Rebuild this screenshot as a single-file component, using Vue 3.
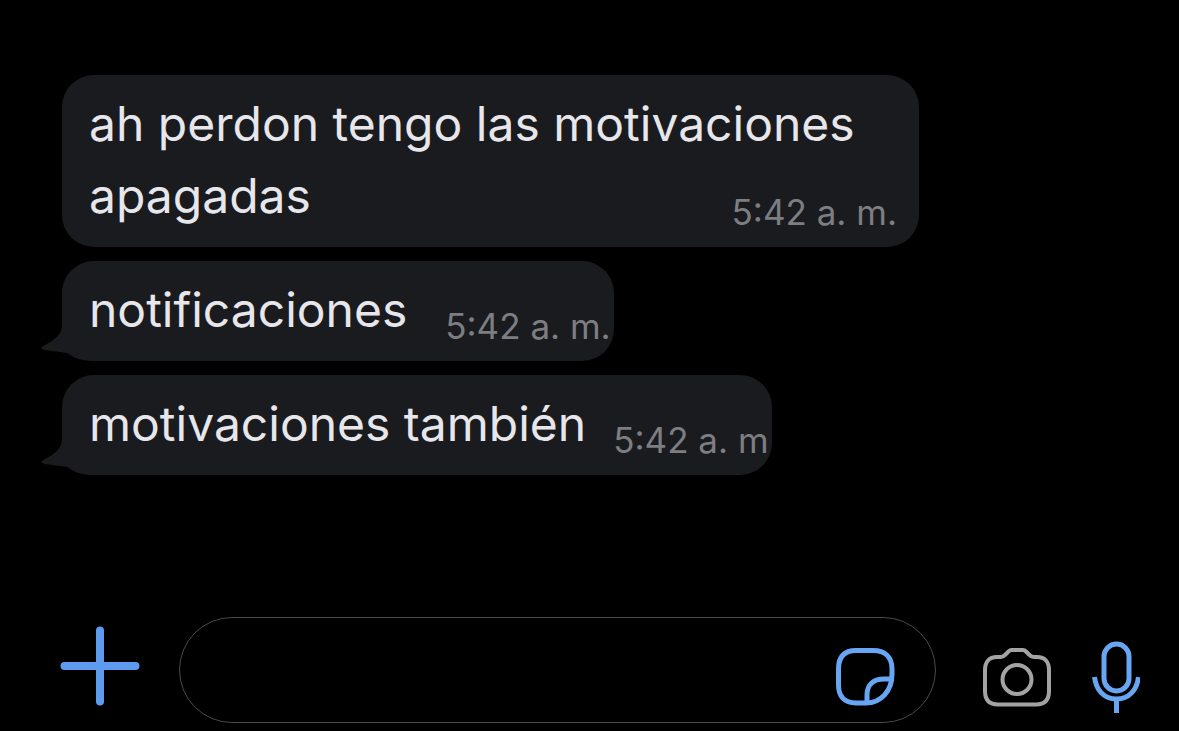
<script setup>
import { ref } from 'vue'

const draft = ref('')
const messages = [
  { id: 1, text: 'ah perdon tengo las motivaciones apagadas', time: '5:42 a. m.', kind: 'long' },
  { id: 2, text: 'notificaciones', time: '5:42 a. m.', kind: 'short', tail: true },
  { id: 3, text: 'motivaciones también', time: '5:42 a. m', kind: 'medium', tail: true }
]
</script>

<template>
  <main class="chat">
    <section class="messages" aria-label="Mensajes">
      <article v-for="m in messages" :key="m.id" class="bubble" :class="m.kind">
        <svg v-if="m.tail" class="tail" viewBox="0 0 54 50" aria-hidden="true">
          <path d="M21 0V14C21 23 14 29 4 34C0 36 -1 38 4 39L26 42C33 47 40 50 54 50V0Z" />
        </svg>
        <p class="text">{{ m.text }}<time class="time">{{ m.time }}</time></p>
      </article>
    </section>

    <form class="composer" @submit.prevent>
      <button type="button" class="icon plus" aria-label="Adjuntar">
        <svg viewBox="0 0 80 106" width="80" height="106">
          <path d="M40 13.500V84.500M4.500 49H75.500" />
        </svg>
      </button>
      <div class="field">
        <input v-model="draft" type="text" aria-label="Mensaje" />
        <button type="button" class="icon sticker" aria-label="Stickers">
          <svg viewBox="0 0 60 104" width="60" height="104">
            <path d="M21 32.500H38C50 32.500 57 39 57 51V56C57 73 46 85 31 85H21C9 85 3.500 78 3.500 67V51C3.500 39 9 32.500 21 32.500Z" />
            <path d="M56.500 61H49C38 61 32 67 32 77V84.500" />
          </svg>
        </button>
      </div>
      <button type="button" class="icon camera" aria-label="Cámara">
        <svg viewBox="0 0 70 106" width="70" height="106">
          <path d="M15 40H19C21 40 22 39 23.500 37.500L26.500 34.500C27.500 33.500 28 33 29.500 33H41C42.500 33 43 33.500 44 34.500L47 37.500C48.500 39 49.500 40 51.500 40H55C63 40 67 45 67 53V74C67 83 63 87.500 54 87.500H16C7 87.500 3 83 3 74V53C3 45 7 40 15 40Z" />
          <circle cx="35" cy="62.500" r="14.500" />
        </svg>
      </button>
      <button type="button" class="icon mic" aria-label="Grabar audio">
        <svg viewBox="0 0 48 106" width="48" height="106">
          <rect x="12" y="27" width="25" height="47" rx="12.500" />
          <path d="M2.500 60C4 73 12 82 24.500 82S45 73 46.500 60M24.500 82V96" />
        </svg>
      </button>
    </form>
  </main>
</template>

<style>
body {
  margin: 0;
  background: #000;
}
</style>

<style scoped>
.chat {
  box-sizing: border-box;
  min-height: 100vh;
  display: flex;
  flex-direction: column;
  justify-content: space-between;
  gap: 40px;
  padding: 75px 0 8px;
  background: #000;
  font-family: Inter, "Liberation Sans", sans-serif;
}

.messages {
  display: flex;
  flex-direction: column;
  align-items: flex-start;
  gap: 14px;
  padding: 0 260px 0 62px;
}

.bubble {
  position: relative;
  padding: 13px 3px 15px 27px;
  border-radius: 32px;
  background: #1a1b1e;
}

.long {
  padding-right: 22px;
}

.text {
  position: relative;
  z-index: 1;
  display: flow-root;
  margin: 0;
  color: #e6e6eb;
  font-size: 48px;
  font-weight: 400;
  line-height: 72px;
}

.time {
  float: right;
  margin: 33px 0 0 38px;
  color: #7d7e82;
  font-size: 35px;
  line-height: 39px;
  white-space: nowrap;
}

.medium .time {
  margin-left: 27px;
}

.tail {
  position: absolute;
  left: -21px;
  bottom: 0;
  width: 54px;
  height: 50px;
  fill: #1a1b1e;
}

.composer {
  display: flex;
  align-items: center;
  padding: 0 39px 0 60px;
}

.icon {
  display: block;
  flex: none;
  padding: 0;
  border: 0;
  background: none;
  cursor: pointer;
}

.icon svg {
  display: block;
  fill: none;
  stroke: #68a5f2;
  stroke-width: 5;
}

.plus svg {
  stroke: #5c9bed;
  stroke-width: 8;
  stroke-linecap: round;
}

.camera svg {
  stroke: #a3a3a3;
  stroke-width: 4;
}

.field {
  box-sizing: border-box;
  flex: 1;
  min-width: 0;
  height: 106px;
  display: flex;
  align-items: center;
  margin: 0 46px 0 39px;
  padding: 0 40px;
  border: 1px solid #4a4a4a;
  border-radius: 53px;
}

.field input {
  flex: 1;
  min-width: 0;
  padding: 0;
  border: 0;
  outline: 0;
  background: transparent;
  color: #e6e6eb;
  font: inherit;
  font-size: 48px;
}

.camera {
  margin-right: 40px;
}
</style>
